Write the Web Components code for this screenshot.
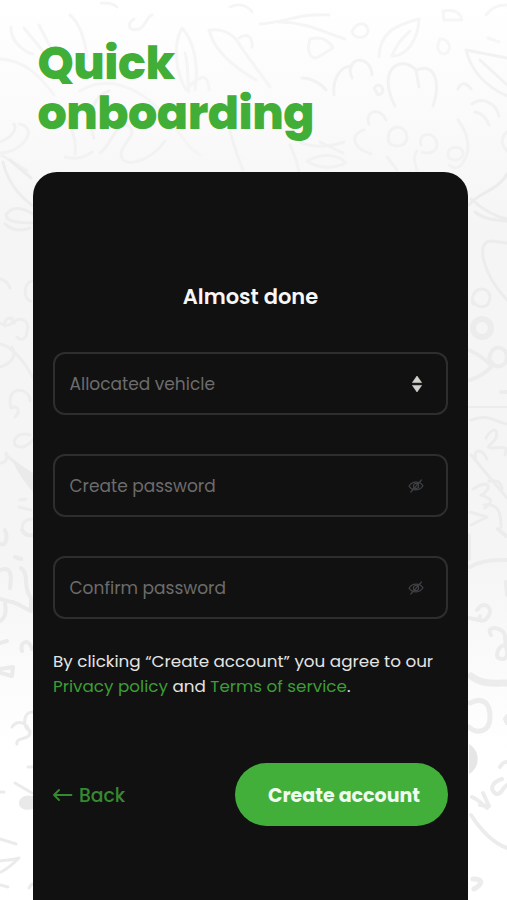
<!DOCTYPE html>
<html lang="en">
<head>
<meta charset="utf-8">
<meta name="viewport" content="width=device-width, initial-scale=1">
<title>Quick onboarding</title>
<style>
    html, body {
        margin: 0;
        height: 100%;
        overflow: hidden;
        font-family: Poppins, Inter, "Liberation Sans", sans-serif;
    }
</style>
</head>
<body>
<onboarding-page>
    <span slot="title">Quick<br>onboarding</span>
    <signup-card heading="Almost done">
        <form-field label="Allocated vehicle" icon="sort"></form-field>
        <form-field label="Create password" icon="eye"></form-field>
        <form-field label="Confirm password" icon="eye"></form-field>
        <terms-note slot="terms"></terms-note>
        <back-link slot="actions">Back</back-link>
        <pill-button slot="actions">Create account</pill-button>
    </signup-card>
</onboarding-page>

<script>
// Hand drawn fruit and leaf pattern behind the page
class DoodlePattern extends HTMLElement {
    constructor() {
        super();
        this.attachShadow({ mode: 'open' });
    }

    connectedCallback() {
        this.shadowRoot.innerHTML = `
            <style>
                :host {
                    display: block;
                    position: absolute;
                    inset: 0;
                    background: linear-gradient(#fff 0, #fbfbfb 100px, #f5f5f5 230px, #f5f5f5 560px, #fff 750px);
                }
                svg { display: block; }
                g { fill: none; stroke-linecap: round; stroke-linejoin: round; }
            </style>
            <svg width="507" height="900" viewBox="0 0 507 900">
                <!-- top -->
                <g stroke="#f5f5f5" stroke-width="3">
                    <path d="M11 27c-1 16 16 26 22 27M24 28l22 27M39 25l12 23M70 15c10 8 16 28 17 43"/>
                    <path d="M101 3c7 0 12 0 16 4M134 19c-8 5-5 13 5 10 5 0 8-13 13-14M230 7c9-4 17-2 22 5"/>
                    <path d="M182 28c-10 18-6 44 4 62 9-10 22-22 23 0M182 28c12 13 17 37 13 62M185 53c4 13 2 26 4 39"/>
                    <path d="M209 30c15-2 26 5 32 17l29 40M209 30c5 19 20 34 47 50M239 38c8-5 14-2 13 9"/>
                    <path d="M260 24c24-1 38-11 69-9M279 22c28 0 46 11 66 17M310 39c-4 13 1 23 10 17l13-8c-5-9-12-12-23-9"/>
                    <path d="M0 59c22 1 38 14 54 36M80 91c28-17 57-3 78 17 22 20 24 36 42 47"/>
                </g>
                <g stroke="#f2f2f2" stroke-width="3">
                    <path d="M94 138c-7-19-2-42 15-47M100 153c11-7 15-31 29-27 10 8-8 18-8 28 0 16 29 8 44-13"/>
                    <path d="M0 153c22 0 40-25 19-29M66 120c9 12 10 25 9 34M65 157c13 3 20 0 27-5M230 132c6 18 8 27 13 38"/>
                    <path d="M290 145c5 11 8 20 9 27M302 78c11 0 20 7 24 12M300 142c12 6 30 5 44 0M307 161c16-8 31-7 39 2-12 6-27 6-39-2M320 142l23 11"/>
                    <path d="M352 32c4-10 14-11 16-2 0 9-13 10-16 2M379 57c1-26 18-32 40-38-1 21-12 37-27 37 5-13 10-17 18-25" stroke="#f5f5f5"/>
                    <path d="M334 95c-2-17 7-29 18-29M352 78c-9-21 19-25 20-3M395 106c-19-37 6-52 21-36l3 17M417 70c18-8 24 13 16 36"/>
                    <path d="M444 20l-1-9c9-1 17-1 19 9zM440 39c-6 12 2 18 8 13 4-7-1-13-8-13M488 38l11 4M486 15c6-8 12-10 21-10" stroke="#f6f6f6"/>
                    <path d="M376 86c6-4 11 8 2 9l-4-7M369 124c-5-15 13-16 17-4M371 154c-23-8-18-22-7-24M390 144c-8-19 17-23 17-6-1 10-15 10-19 3"/>
                    <path d="M421 145c-4-14 16-14 16 0-1 6-7 10-15 7M417 151c-5 6-2 14 0 19M387 157l10 13M458 120c10 13 14 30 5 42-3 8-11 6-14 3"/>
                    <path d="M448 154c0-9 16-9 15 0-1 8-16 8-15 0M466 50l41 8M466 50c5 20 19 36 41 46M480 60l27 25M458 89c4-9 9-5 13 0"/>
                    <path d="M472 104c10-8 24-1 27 12M475 112c6 1 11 5 14 13M507 132c-7 6-6 13 0 19"/>
                </g>
                <path d="M0 142c13-5 18-14 13-19M1 155l27 16" fill="none" stroke="#f1f1f1" stroke-width="3"/>
                <!-- left -->
                <g stroke="#ededed" stroke-width="3">
                    <path d="M3 162c4 18 15 33 30 44M10 160l21 18M33 223c-15 0-27-1-27-8 6-10 17-7 27-1M5 224c8 7 17 7 25 4M0 279c5 1 8 4 10 9"/>
                    <path d="M32 281c-9 2-9 19-1 20M0 323c10 7 17-4 10-5-4 0-6 4-5 8M14 323c3-7 17-4 13 8 0 9-7 10-10 6M0 344c9 1 23 14 33 34M0 367c12-4 17-11 12-20"/>
                    <path d="M11 408c-6-25 20-20 19-7M11 408c7-3 10 3 4 9M30 435c-9-3-18 2-15 10 7 5 13 0 18-5M0 463c8 0 7-8 6-10M6 455l11 9"/>
                    <path d="M20 500l6-1M19 507l12 3M22 529c0-8 5-10 11-10"/>
                </g>
                <path d="M12 459l21 14v19C25 483 17 472 12 459" fill="#eaeaea"/>
                <g stroke="#ebebeb" stroke-width="4">
                    <path d="M0 544c8 3 7-10 5-14M22 530c2 4 6 6 11 5M15 557l6 2M0 570c11-4 12 4 10 18M21 568c9 7 1 19 10 30v13l-18-9M0 599c8 2 16 4 20 6M5 604c2 9-1 15-5 17"/>
                    <path d="M0 643l7-2M22 651c-3-11 8-12 10-2M0 669l13-2-1 9-11-3"/>
                    <path d="M30 731c-8-3-7-20 3-19M12 727c5-7 15-6 18 6 0 7-15 4-13 11M28 767h4M0 792h4M15 783l17 10M0 839l16 5M0 861c8-1 13-1 19-3-7 7-12 11-18 14M0 885l8 2M29 888l3-4" stroke-width="3"/>
                </g>
                <path d="M33 796c-8-2-14 2-14 7 0 6 6 8 14 6z" fill="#e9e9e9"/>
                <!-- right -->
                <g stroke="#ececec" stroke-width="4">
                    <path d="M469 205c8-12 29-14 38-31M471 199c11 10 22 17 36 20M475 212c10 8 21 8 32 9M507 300c-26-28-31-59-16-59l16 2" stroke-width="3"/>
                    <path d="M473 304c-4-16 14-20 17-8 0 14-13 13-17 5" stroke-width="3"/>
                    <circle cx="482" cy="328" r="9" stroke-width="6"/>
                    <path d="M469 350c7 3 15 8 23 16-7 8-16 12-22 14M489 360c2-18 18-14 18-3 0 9-11 14-17 3M501 392h6"/>
                    <path d="M469 407h38" stroke-width="2"/>
                    <path d="M471 420c17-7 24 2 36 4M486 438c5-9 13-12 10 0-4 7-13 10-3 10 17-2 13 1 12 7M476 461c-4-12 6-14 11-2M471 455l36 43M489 481c7-1 12 0 13 8M473 489c17-11 20 0 8 6 11 4 13 5 4 13M484 505c14-2 17 7 17 22M470 512l17 5-16 8" stroke-width="3"/>
                    <path d="M469 535v24M470 567c12-7 24-7 37-7M498 529l8 7M506 582l1 13"/>
                    <path d="M477 610c6-10 16-3 12 5-5 9-11 6-9 1M469 618l10 2M491 635c-7-11 16-8 14 3l2 15M497 655c2-17 22-9 7 4-5 0-7-2-7-4"/>
                    <path d="M471 676c11 9 25 7 36 7" stroke-width="7"/>
                    <path d="M470 703c14-7 20 1 20 14 0 16-14 17-21 10" stroke-width="5"/>
                    <path d="M507 716l-2 3 2 4M500 767c3-5 5-5 7-5M502 779c-10 3-13 10-6 15 7 1 6-7 11-9M472 797c7 3 11 8 15 11M483 793l6 13-9-1M471 815c11 17 22 28 36 33"/>
                    <path d="M473 879c12 0 8 6 1 10" stroke-width="5"/>
                </g>
                <path d="M469 744c13 8 10 25 0 30z" fill="#e6e6e6"/>
            </svg>
        `;
    }
}

class OnboardingPage extends HTMLElement {
    constructor() {
        super();
        this.attachShadow({ mode: 'open' });
    }

    connectedCallback() {
        this.shadowRoot.innerHTML = `
            <style>
                :host {
                    display: flex;
                    flex-direction: column;
                    box-sizing: border-box;
                    position: relative;
                    width: 507px;
                    height: 900px;
                    padding: 38px 39px 0 33px;
                    overflow: hidden;
                }
                h1 {
                    position: relative;
                    height: 133.5px;
                    margin: 0 0 0 4.5px;
                    color: #40ae37;
                    font-size: 46px;
                    line-height: 50px;
                    font-weight: 800;
                    letter-spacing: -0.5px;
                }
            </style>
            <doodle-pattern></doodle-pattern>
            <h1><slot name="title"></slot></h1>
            <slot></slot>
        `;
    }
}

class SignupCard extends HTMLElement {
    constructor() {
        super();
        this.attachShadow({ mode: 'open' });
    }

    connectedCallback() {
        this.shadowRoot.innerHTML = `
            <style>
                :host {
                    display: flex;
                    flex-direction: column;
                    position: relative;
                    box-sizing: border-box;
                    flex: 1;
                    padding: 110.5px 20px 0;
                    background: #111;
                    border-radius: 24px 24px 0 0;
                }
                h2 {
                    margin: 0 0 40px;
                    text-align: center;
                    color: #f7f7f7;
                    font-size: 21px;
                    line-height: 30px;
                    font-weight: 600;
                }
                .fields {
                    display: flex;
                    flex-direction: column;
                    gap: 39px;
                }
                .terms { margin-top: 30px; }
                .actions {
                    display: flex;
                    align-items: center;
                    justify-content: space-between;
                    margin-top: 64px;
                }
            </style>
            <h2>${this.getAttribute('heading') || ''}</h2>
            <div class="fields"><slot></slot></div>
            <div class="terms"><slot name="terms"></slot></div>
            <div class="actions"><slot name="actions"></slot></div>
        `;
    }
}

const ICONS = {
    sort: `<svg width="12" height="18" viewBox="0 0 12 18" fill="#d2d2ce">
        <path d="M6 1l4.6 6.6H1.4zM6 17L1.4 10.4h9.2z" stroke="#d2d2ce" stroke-width=".6" stroke-linejoin="round"/></svg>`,
    eye: `<svg width="16" height="14" viewBox="0 0 16 14" fill="none" stroke="#3e4043" stroke-width="1.2" stroke-linecap="round">
        <path d="M1 7.200C4 2 11.500 1.500 15 6.800 12 12 4.500 12.500 1 7.200z"/><circle cx="8" cy="7" r="2.600"/><path d="M13.500 1L2.800 13"/></svg>`
};

class FormField extends HTMLElement {
    constructor() {
        super();
        this.attachShadow({ mode: 'open' });
    }

    connectedCallback() {
        const icon = this.getAttribute('icon');

        this.shadowRoot.innerHTML = `
            <style>
                :host {
                    display: flex;
                    align-items: center;
                    justify-content: space-between;
                    box-sizing: border-box;
                    height: 63px;
                    padding: 0 22.5px 0 14.5px;
                    border: 2px solid #2e2e2e;
                    border-radius: 12px;
                }
                .label {
                    color: #6c6c6c;
                    font-size: 17px;
                    line-height: 26px;
                }
                svg { display: block; }
                .sort { margin-right: 1px; }
            </style>
            <span class="label">${this.getAttribute('label') || ''}</span>
            <span class="${icon}">${ICONS[icon] || ''}</span>
        `;
    }
}

class TermsNote extends HTMLElement {
    constructor() {
        super();
        this.attachShadow({ mode: 'open' });
    }

    connectedCallback() {
        this.shadowRoot.innerHTML = `
            <style>
                :host {
                    display: block;
                    color: #e4e4e4;
                    font-size: 16.8px;
                    line-height: 25px;
                    white-space: nowrap;
                }
                a { color: #3c9d35; }
            </style>
            By clicking “Create account” you agree to our<br>
            <a>Privacy policy</a> and <a>Terms of service</a>.
        `;
    }
}

class BackLink extends HTMLElement {
    constructor() {
        super();
        this.attachShadow({ mode: 'open' });
    }

    connectedCallback() {
        this.shadowRoot.innerHTML = `
            <style>
                :host {
                    display: flex;
                    align-items: center;
                    gap: 6px;
                    color: #358a30;
                    font-size: 18.8px;
                    line-height: 28px;
                    font-weight: 500;
                    cursor: pointer;
                }
                span { padding-top: 2px; }
            </style>
            <svg width="20" height="14" viewBox="0 0 20 14" fill="none" stroke="currentColor" stroke-width="1.8" stroke-linecap="round" stroke-linejoin="round">
                <path d="M18.500 7H1M6 2L1 7l5 5"/>
            </svg>
            <span><slot></slot></span>
        `;
    }
}

class PillButton extends HTMLElement {
    constructor() {
        super();
        this.attachShadow({ mode: 'open' });
    }

    connectedCallback() {
        this.shadowRoot.innerHTML = `
            <style>
                :host { display: block; }
                button {
                    display: block;
                    width: 213px;
                    height: 63px;
                    padding: 2px 0 0 5px;
                    border: 0;
                    border-radius: 32px;
                    background: #43af3b;
                    color: #effbef;
                    font: 700 19px/28px Poppins, Inter, "Liberation Sans", sans-serif;
                    white-space: nowrap;
                    cursor: pointer;
                }
            </style>
            <button type="button"><slot></slot></button>
        `;
    }
}

customElements.define('doodle-pattern', DoodlePattern);
customElements.define('onboarding-page', OnboardingPage);
customElements.define('signup-card', SignupCard);
customElements.define('form-field', FormField);
customElements.define('terms-note', TermsNote);
customElements.define('back-link', BackLink);
customElements.define('pill-button', PillButton);
</script>
</body>
</html>
